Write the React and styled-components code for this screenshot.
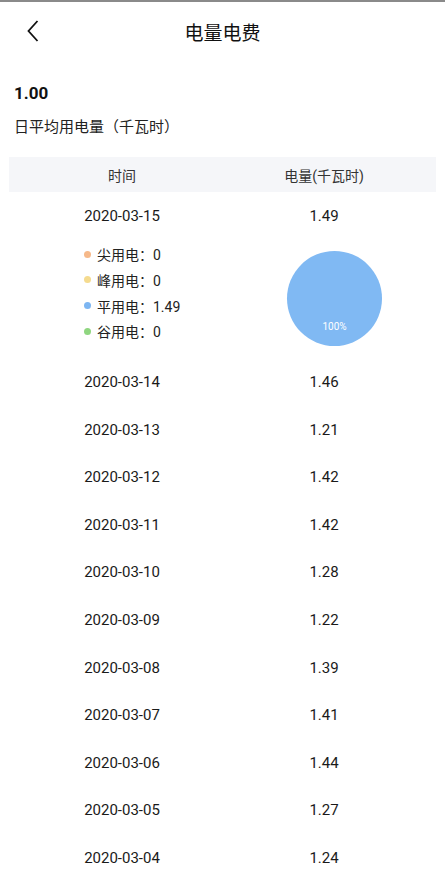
import React from 'react'
import styled, {createGlobalStyle} from 'styled-components'

const GlobalStyle = createGlobalStyle`
  html, body {
    margin: 0;
    padding: 0;
    background: #fff;
  }
  body {
    font-family: Roboto, "Noto Sans CJK SC", sans-serif;
    color: #222;
  }
`;

const rows = [
  {date: '2020-03-15', value: '1.49', open: true},
  {date: '2020-03-14', value: '1.46'},
  {date: '2020-03-13', value: '1.21'},
  {date: '2020-03-12', value: '1.42'},
  {date: '2020-03-11', value: '1.42'},
  {date: '2020-03-10', value: '1.28'},
  {date: '2020-03-09', value: '1.22'},
  {date: '2020-03-08', value: '1.39'},
  {date: '2020-03-07', value: '1.41'},
  {date: '2020-03-06', value: '1.44'},
  {date: '2020-03-05', value: '1.27'},
  {date: '2020-03-04', value: '1.24'}
];

const legend = [
  {label: '尖用电', value: '0', color: '#f6b98a'},
  {label: '峰用电', value: '0', color: '#f5db8f'},
  {label: '平用电', value: '1.49', color: '#7db6f2'},
  {label: '谷用电', value: '0', color: '#8fd680'}
];

const BackIcon = () => (
  <svg width="12" height="22" viewBox="0 0 12 22">
    <path d="M10.5 1 L1.5 11 L10.5 21" fill="none" stroke="#111" strokeWidth="1.8" />
  </svg>
);

const App = () => (
  <Page>
    <GlobalStyle />
    <NavBar>
      <Back><BackIcon /></Back>
      <Title>电量电费</Title>
    </NavBar>
    <Summary>
      <Amount>1.00</Amount>
      <Caption>日平均用电量（千瓦时）</Caption>
    </Summary>
    <Table>
      <HeadRow>
        <Cell>时间</Cell>
        <Cell>电量(千瓦时)</Cell>
      </HeadRow>
      {rows.map(r => (
        <React.Fragment key={r.date}>
          <Row>
            <Cell>{r.date}</Cell>
            <Cell>{r.value}</Cell>
          </Row>
          {r.open && (
            <Detail>
              <Legend>
                {legend.map(l => (
                  <LegendItem key={l.label}>
                    <Dot color={l.color} />
                    {l.label}：{l.value}
                  </LegendItem>
                ))}
              </Legend>
              <Pie>
                <PieLabel>100%</PieLabel>
              </Pie>
            </Detail>
          )}
        </React.Fragment>
      ))}
    </Table>
  </Page>
);

export default App

const Page = styled.div`
  width: 445px;
  min-height: 896px;
  border-top: 2px solid #8a8a8a;
  box-sizing: border-box;
  overflow: hidden;
`;
const NavBar = styled.div`
  position: relative;
  height: 58px;
  display: flex;
  align-items: center;
  justify-content: center;
`;
const Back = styled.div`
  position: absolute;
  left: 27px;
  top: 18px;
  display: flex;
`;
const Title = styled.div`
  font-size: 19px;
  color: #111;
`;
const Summary = styled.div`
  padding: 21px 14px 19px;
`;
const Amount = styled.div`
  font-size: 17px;
  font-weight: 700;
  line-height: 24px;
  color: #111;
`;
const Caption = styled.div`
  margin-top: 11px;
  font-size: 15px;
  line-height: 22px;
  color: #222;
`;
const Table = styled.div`
  margin: 0 9px;
`;
const Row = styled.div`
  display: grid;
  grid-template-columns: 226px 178px;
  height: 47.6px;
  align-items: center;
  font-size: 15px;
  color: #1a1a1a;
`;
const HeadRow = styled(Row)`
  height: 35px;
  background: #f5f6f9;
  font-size: 14px;
  color: #333;
  grid-template-columns: 226px 178px 1fr;
`;
const Cell = styled.div`
  text-align: center;
`;
const Detail = styled.div`
  height: 118.6px;
  display: flex;
  justify-content: space-between;
  align-items: flex-start;
  padding: 2px 54px 0 75px;
  box-sizing: border-box;
`;
const Legend = styled.div`
  display: flex;
  flex-direction: column;
`;
const LegendItem = styled.div`
  display: flex;
  align-items: center;
  height: 25.6px;
  font-size: 14px;
  color: #222;
`;
const Dot = styled.span`
  width: 7px;
  height: 7px;
  border-radius: 50%;
  background: ${p => p.color};
  margin-right: 6px;
`;
const Pie = styled.div`
  margin-top: 9px;
  width: 95px;
  height: 95px;
  border-radius: 50%;
  background: #80b9f3;
  display: flex;
  align-items: flex-end;
  justify-content: center;
  padding-bottom: 13px;
  box-sizing: border-box;
`;
const PieLabel = styled.div`
  font-size: 10px;
  line-height: 12px;
  color: #fff;
`;
